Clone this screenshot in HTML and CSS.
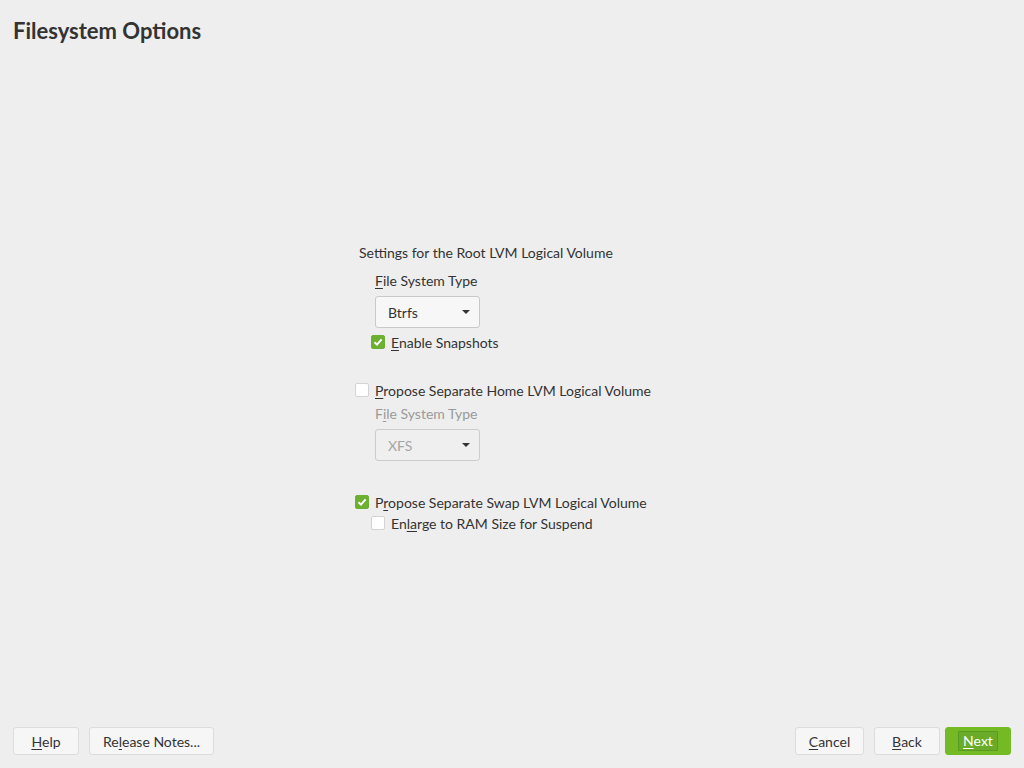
FILE: index.html
```html
<!DOCTYPE html>
<html>
<head>
<meta charset="utf-8">
<link rel="stylesheet" href="styles.css">
</head>
<body>
<div class="app">
  <h1 class="title">Filesystem Options</h1>
  <main class="main">
    <div class="form">
      <div class="group-title">Settings for the Root LVM Logical Volume</div>
      <div class="label l1"><u>F</u>ile System Type</div>
      <div class="select s1"><span>Btrfs</span><span class="caret"></span></div>
      <div class="check-row sub r1"><span class="box checked"><svg viewBox="0 0 14 14"><path d="M3.5 7.2 L6 9.6 L10.6 4.4" fill="none" stroke="#fff" stroke-width="2"/></svg></span><span class="txt"><u>E</u>nable Snapshots</span></div>

      <div class="check-row r2"><span class="box"></span><span class="txt"><u>P</u>ropose Separate Home LVM Logical Volume</span></div>
      <div class="label l2 disabled">F<u>i</u>le System Type</div>
      <div class="select s2 disabled"><span>XFS</span><span class="caret"></span></div>

      <div class="check-row r3"><span class="box checked"><svg viewBox="0 0 14 14"><path d="M3.5 7.2 L6 9.6 L10.6 4.4" fill="none" stroke="#fff" stroke-width="2"/></svg></span><span class="txt">P<u>r</u>opose Separate Swap LVM Logical Volume</span></div>
      <div class="check-row sub r4"><span class="box"></span><span class="txt">En<u>l</u><u>a</u>rge to RAM Size for Suspend</span></div>
    </div>
  </main>
  <footer class="footer">
    <div class="btns">
      <button class="btn w-help"><u>H</u>elp</button>
      <button class="btn w-rel">Re<u>l</u>ease Notes...</button>
    </div>
    <div class="btns right">
      <button class="btn w-cancel"><u>C</u>ancel</button>
      <button class="btn w-back"><u>B</u>ack</button>
      <button class="btn primary w-next"><span class="focus"><u>N</u>ext</span></button>
    </div>
  </footer>
</div>
</body>
</html>
```

FILE: styles.css
```css
html, body {
  margin: 0;
  padding: 0;
  background: #eeeeee;
}
body {
  font-family: "Lato", "Open Sans", sans-serif;
  font-size: 14px;
  color: #333333;
}
.app {
  width: 1024px;
  height: 768px;
  display: flex;
  flex-direction: column;
}
.title {
  margin: 0;
  padding: 16px 0 0 13px;
  height: 40px;
  font-size: 22px;
  font-weight: 700;
  line-height: 30px;
  color: #333333;
}
.main {
  flex: 1;
  display: flex;
  justify-content: center;
  align-items: flex-start;
}
.form {
  margin-top: 187px;
  width: 314px;
  white-space: nowrap;
}
u {
  text-decoration-thickness: 1px;
  text-underline-offset: 2px;
}
.group-title {
  height: 20px;
  line-height: 20px;
  padding-left: 4px;
}
.label {
  height: 20px;
  line-height: 20px;
  padding-left: 20px;
}
.l1 { margin-top: 8px; }
.l2 { margin-top: 4px; }
.disabled { color: #9a9a9a; }
.select {
  margin-left: 20px;
  height: 30px;
  border: 1px solid #c9c9c9;
  border-radius: 3px;
  background: #f7f7f7;
  display: flex;
  align-items: center;
  justify-content: space-between;
  padding: 0 9px 0 12px;
  box-sizing: content-box;
  width: 82px;
}
.select.disabled {
  background: #efefef;
  border-color: #cccccc;
  color: #a5a5a5;
}
.s1 { margin-top: 5px; }
.s2 { margin-top: 5px; }
.caret {
  width: 0;
  height: 0;
  border-left: 4px solid transparent;
  border-right: 4px solid transparent;
  border-top: 4px solid #333333;
}
.check-row {
  display: flex;
  align-items: center;
  height: 20px;
}
.check-row.sub { padding-left: 16px; }
.r1 { margin-top: 4px; }
.r2 { margin-top: 28px; }
.r3 { margin-top: 31px; }
.r4 { margin-top: 1px; }
.box {
  width: 14px;
  height: 14px;
  box-sizing: border-box;
  border: 1px solid #d3d3d3;
  border-radius: 2px;
  background: #ffffff;
  margin-right: 6px;
  display: inline-flex;
}
.box.checked {
  background: #6db031;
  border-color: #6db031;
}
.box svg {
  width: 14px;
  height: 14px;
  margin: -1px;
}
.footer {
  height: 41px;
  display: flex;
  justify-content: space-between;
  padding: 0 13px;
}
.btns {
  display: flex;
  gap: 10px;
  align-items: flex-start;
}
.btns.right { gap: 0; }
.btn {
  height: 28px;
  border: 1px solid #dcdcdc;
  border-radius: 3px;
  background: #f6f6f6;
  font-family: inherit;
  font-size: 14px;
  color: #333333;
  padding: 0;
  display: flex;
  align-items: center;
  justify-content: center;
}
.w-help { width: 66px; }
.w-rel { width: 125px; }
.w-cancel { width: 69px; margin-right: 10px; }
.w-back { width: 66px; margin-right: 5px; }
.w-next { width: 66px; }
.btn.primary {
  background: #73ba25;
  border-color: #73ba25;
  color: #ffffff;
}
.focus {
  border: 1px solid #5a9a22;
  background: #6aac2a;
  border-radius: 1px;
  padding: 0 4px;
  height: 18px;
  line-height: 18px;
  display: inline-block;
}
```
